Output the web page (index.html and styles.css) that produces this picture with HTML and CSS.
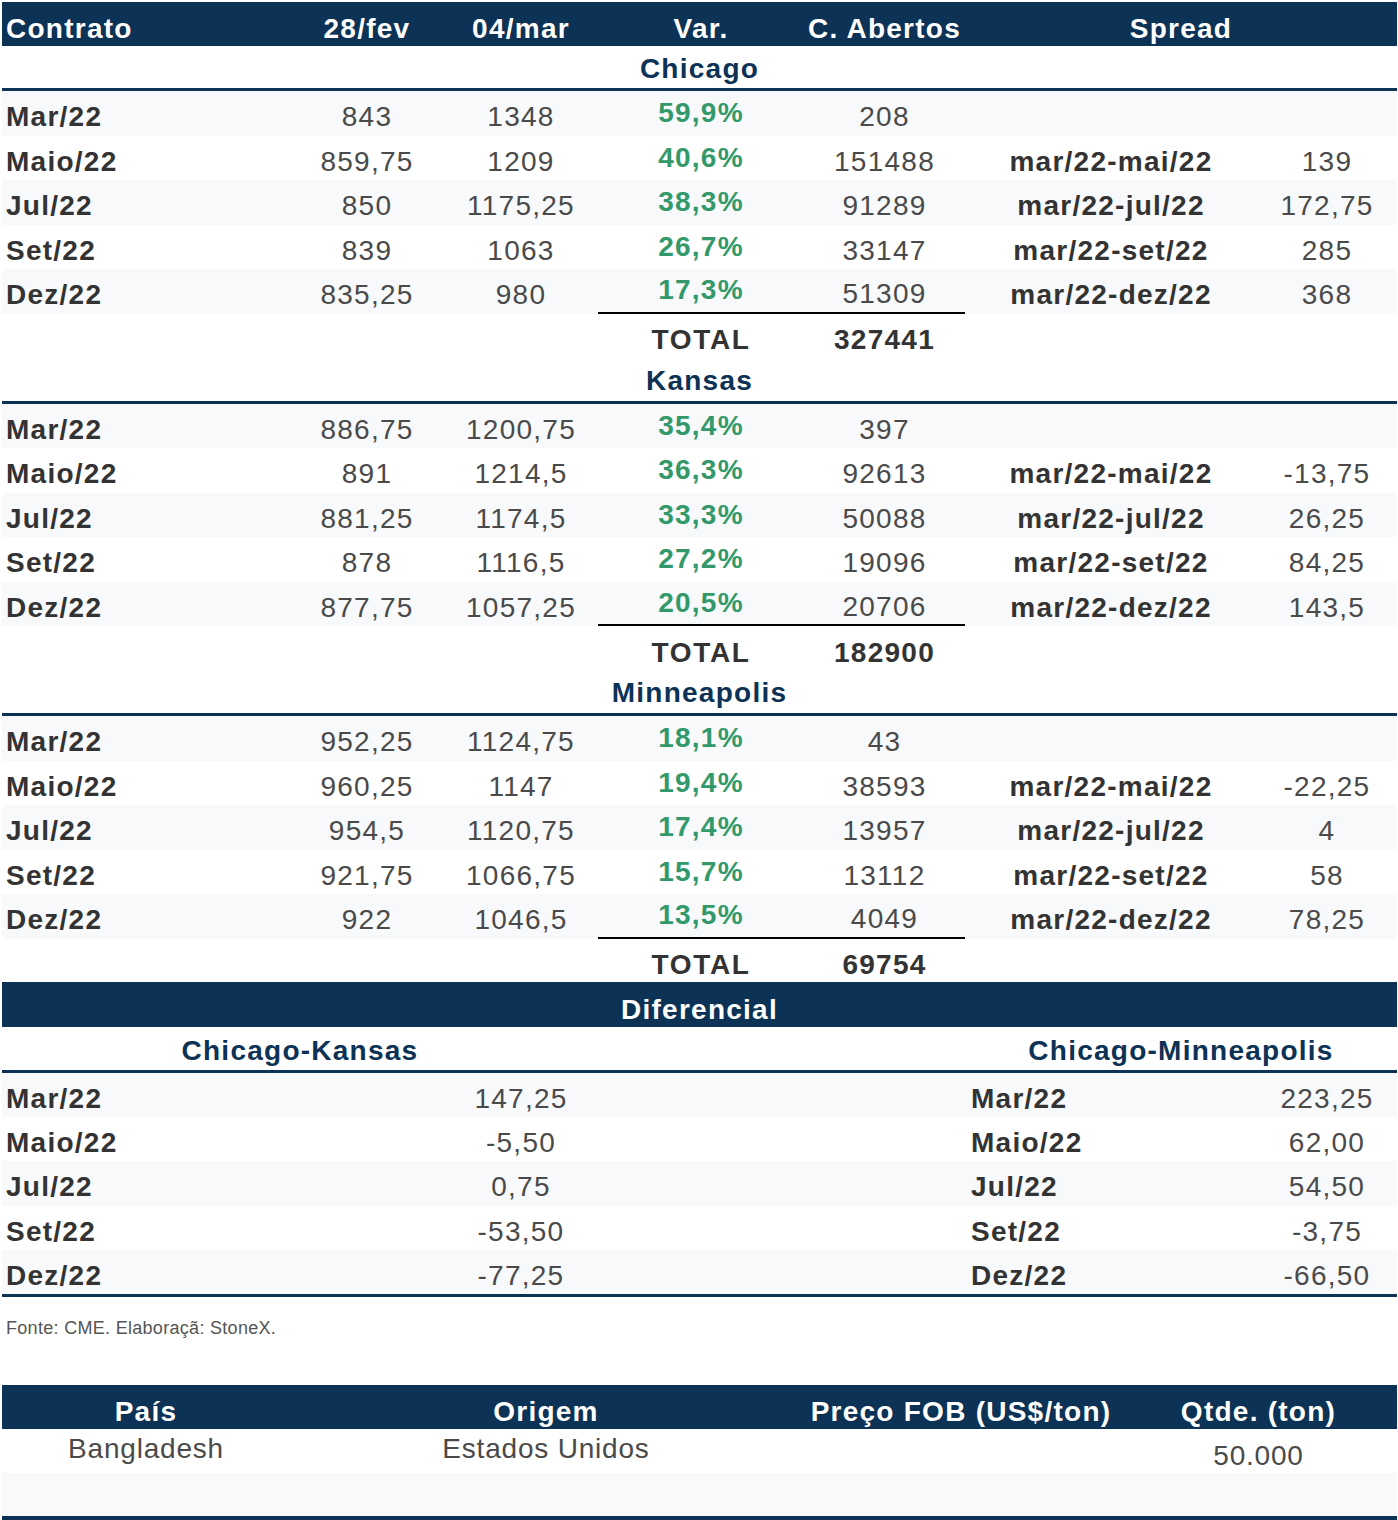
FILE: index.html
```html
<!DOCTYPE html>
<html lang="pt-BR">
<head>
<meta charset="utf-8">
<title>Contratos</title>
<link rel="stylesheet" href="styles.css">
</head>
<body>
<div class="sheet">
  <div class="g7 hdr">
    <div class="c lbl">Contrato</div>
    <div class="c">28/fev</div>
    <div class="c">04/mar</div>
    <div class="c">Var.</div>
    <div class="c">C. Abertos</div>
    <div class="c span2">Spread</div>
  </div>

  <div class="sect first">Chicago</div>
  <div class="g7 row alt"><div class="c lbl">Mar/22</div><div class="c num">843</div><div class="c num">1348</div><div class="c pct">59,9%</div><div class="c num">208</div><div class="c"></div><div class="c"></div></div>
  <div class="g7 row"><div class="c lbl">Maio/22</div><div class="c num">859,75</div><div class="c num">1209</div><div class="c pct">40,6%</div><div class="c num">151488</div><div class="c sp">mar/22-mai/22</div><div class="c num">139</div></div>
  <div class="g7 row alt"><div class="c lbl">Jul/22</div><div class="c num">850</div><div class="c num">1175,25</div><div class="c pct">38,3%</div><div class="c num">91289</div><div class="c sp">mar/22-jul/22</div><div class="c num">172,75</div></div>
  <div class="g7 row"><div class="c lbl">Set/22</div><div class="c num">839</div><div class="c num">1063</div><div class="c pct">26,7%</div><div class="c num">33147</div><div class="c sp">mar/22-set/22</div><div class="c num">285</div></div>
  <div class="g7 row alt"><div class="c lbl">Dez/22</div><div class="c num">835,25</div><div class="c num">980</div><div class="c pct ul">17,3%</div><div class="c num ul">51309</div><div class="c sp">mar/22-dez/22</div><div class="c num">368</div></div>
  <div class="g7 total"><div class="c"></div><div class="c"></div><div class="c"></div><div class="c tl">TOTAL</div><div class="c tv">327441</div><div class="c"></div><div class="c"></div></div>

  <div class="sect">Kansas</div>
  <div class="g7 row alt"><div class="c lbl">Mar/22</div><div class="c num">886,75</div><div class="c num">1200,75</div><div class="c pct">35,4%</div><div class="c num">397</div><div class="c"></div><div class="c"></div></div>
  <div class="g7 row"><div class="c lbl">Maio/22</div><div class="c num">891</div><div class="c num">1214,5</div><div class="c pct">36,3%</div><div class="c num">92613</div><div class="c sp">mar/22-mai/22</div><div class="c num">-13,75</div></div>
  <div class="g7 row alt"><div class="c lbl">Jul/22</div><div class="c num">881,25</div><div class="c num">1174,5</div><div class="c pct">33,3%</div><div class="c num">50088</div><div class="c sp">mar/22-jul/22</div><div class="c num">26,25</div></div>
  <div class="g7 row"><div class="c lbl">Set/22</div><div class="c num">878</div><div class="c num">1116,5</div><div class="c pct">27,2%</div><div class="c num">19096</div><div class="c sp">mar/22-set/22</div><div class="c num">84,25</div></div>
  <div class="g7 row alt"><div class="c lbl">Dez/22</div><div class="c num">877,75</div><div class="c num">1057,25</div><div class="c pct ul">20,5%</div><div class="c num ul">20706</div><div class="c sp">mar/22-dez/22</div><div class="c num">143,5</div></div>
  <div class="g7 total"><div class="c"></div><div class="c"></div><div class="c"></div><div class="c tl">TOTAL</div><div class="c tv">182900</div><div class="c"></div><div class="c"></div></div>

  <div class="sect">Minneapolis</div>
  <div class="g7 row alt"><div class="c lbl">Mar/22</div><div class="c num">952,25</div><div class="c num">1124,75</div><div class="c pct">18,1%</div><div class="c num">43</div><div class="c"></div><div class="c"></div></div>
  <div class="g7 row"><div class="c lbl">Maio/22</div><div class="c num">960,25</div><div class="c num">1147</div><div class="c pct">19,4%</div><div class="c num">38593</div><div class="c sp">mar/22-mai/22</div><div class="c num">-22,25</div></div>
  <div class="g7 row alt"><div class="c lbl">Jul/22</div><div class="c num">954,5</div><div class="c num">1120,75</div><div class="c pct">17,4%</div><div class="c num">13957</div><div class="c sp">mar/22-jul/22</div><div class="c num">4</div></div>
  <div class="g7 row"><div class="c lbl">Set/22</div><div class="c num">921,75</div><div class="c num">1066,75</div><div class="c pct">15,7%</div><div class="c num">13112</div><div class="c sp">mar/22-set/22</div><div class="c num">58</div></div>
  <div class="g7 row alt"><div class="c lbl">Dez/22</div><div class="c num">922</div><div class="c num">1046,5</div><div class="c pct ul">13,5%</div><div class="c num ul">4049</div><div class="c sp">mar/22-dez/22</div><div class="c num">78,25</div></div>
  <div class="g7 total last"><div class="c"></div><div class="c"></div><div class="c"></div><div class="c tl">TOTAL</div><div class="c tv">69754</div><div class="c"></div><div class="c"></div></div>

  <div class="bar">Diferencial</div>
  <div class="g7 sub">
    <div class="c span3">Chicago-Kansas</div>
    <div class="c span2"></div>
    <div class="c span2">Chicago-Minneapolis</div>
  </div>
  <div class="diff">
    <div class="g7 drow alt"><div class="c lbl">Mar/22</div><div class="c"></div><div class="c num">147,25</div><div class="c"></div><div class="c"></div><div class="c lbl rl">Mar/22</div><div class="c num">223,25</div></div>
    <div class="g7 drow"><div class="c lbl">Maio/22</div><div class="c"></div><div class="c num">-5,50</div><div class="c"></div><div class="c"></div><div class="c lbl rl">Maio/22</div><div class="c num">62,00</div></div>
    <div class="g7 drow alt"><div class="c lbl">Jul/22</div><div class="c"></div><div class="c num">0,75</div><div class="c"></div><div class="c"></div><div class="c lbl rl">Jul/22</div><div class="c num">54,50</div></div>
    <div class="g7 drow"><div class="c lbl">Set/22</div><div class="c"></div><div class="c num">-53,50</div><div class="c"></div><div class="c"></div><div class="c lbl rl">Set/22</div><div class="c num">-3,75</div></div>
    <div class="g7 drow alt"><div class="c lbl">Dez/22</div><div class="c"></div><div class="c num">-77,25</div><div class="c"></div><div class="c"></div><div class="c lbl rl">Dez/22</div><div class="c num">-66,50</div></div>
  </div>

  <p class="fonte">Fonte: CME. Elaboraçã: StoneX.</p>

  <div class="tbl2">
    <div class="g4 hdr2">
      <div class="c">País</div>
      <div class="c">Origem</div>
      <div class="c">Preço FOB (US$/ton)</div>
      <div class="c">Qtde. (ton)</div>
    </div>
    <div class="g4 r2a">
      <div class="c num up">Bangladesh</div>
      <div class="c num up">Estados Unidos</div>
      <div class="c num"></div>
      <div class="c num down">50.000</div>
    </div>
    <div class="g4 r2b alt"><div class="c"></div><div class="c"></div><div class="c"></div><div class="c"></div></div>
  </div>
</div>
</body>
</html>
```
FILE: styles.css
```css
* { box-sizing: border-box; }
body {
  margin: 0;
  background: #ffffff;
  font-family: "Liberation Sans", Arial, sans-serif;
}
.sheet {
  width: 1395px;
  margin: 2px 0 0 2px;
}
.g7 {
  display: grid;
  grid-template-columns: 288px 154px 154px 206px 161px 292px 140px;
}
.g4 {
  display: grid;
  grid-template-columns: 288px 512px 318px 277px;
}
.c {
  display: flex;
  align-items: center;
  justify-content: center;
  font-size: 28px;
  line-height: 32px;
  letter-spacing: 1.25px;
  white-space: nowrap;
}
.span2 { grid-column: span 2; }
.span3 { grid-column: span 3; }

.hdr {
  height: 44px;
  background: #0c3256;
  color: #ffffff;
  font-weight: bold;
}
.hdr .c { padding-top: 9px; }
.lbl {
  justify-content: flex-start;
  padding-left: 4px;
  font-weight: bold;
  color: #333333;
}
.lbl.rl { padding-left: 6px; }
.hdr .lbl { color: #ffffff; }

.sect {
  height: 46px;
  border-bottom: 3px solid #0c3256;
  display: flex;
  align-items: center;
  justify-content: center;
  padding-top: 3px;
  font-size: 28px;
  line-height: 32px;
  letter-spacing: 1.25px;
  font-weight: bold;
  color: #0c3256;
}
.sect.first { height: 45px; padding-top: 4px; }

.row { height: 44.5px; }
.row .c, .drow .c { padding-top: 8px; }
.row .c.pct { padding-top: 1px; padding-bottom: 1px; }
.alt { background: #f8f9fb; }
.num { color: #4a4a4a; }
.sp { font-weight: bold; color: #333333; }
.pct { font-weight: bold; color: #33996a; }
.ul { border-bottom: 2px solid #000000; }

.total { height: 44px; }
.total .c { padding-top: 9px; }
.total.last { height: 43.5px; }
.total.last .c { padding-top: 9px; }
.tl { font-weight: bold; color: #333333; letter-spacing: 1.7px; }
.tv { font-weight: bold; color: #333333; }

.bar {
  height: 45px;
  background: #0c3256;
  color: #ffffff;
  display: flex;
  align-items: center;
  justify-content: center;
  padding-top: 11px;
  font-size: 28px;
  line-height: 32px;
  letter-spacing: 1.25px;
  font-weight: bold;
}
.sub {
  height: 46px;
  border-bottom: 3px solid #0c3256;
}
.sub .c {
  padding-top: 4px;
  font-weight: bold;
  color: #0c3256;
}
.diff { border-bottom: 3px solid #0c3256; }
.drow { height: 44.2px; }

.fonte {
  margin: 21px 0 0 4px;
  font-size: 18px;
  line-height: 20px;
  letter-spacing: 0.3px;
  color: #555555;
}

.tbl2 {
  margin-top: 47px;
  border-bottom: 4px solid #0c3256;
}
.hdr2 {
  height: 44px;
  background: #0c3256;
  color: #ffffff;
  font-weight: bold;
}
.hdr2 .c { padding-top: 10px; }
.r2a { height: 44px; }
.r2a .c { letter-spacing: 0.8px; }
.r2a .up { padding-bottom: 4px; }
.r2a .down { padding-top: 10px; }
.r2b { height: 43px; }
```
